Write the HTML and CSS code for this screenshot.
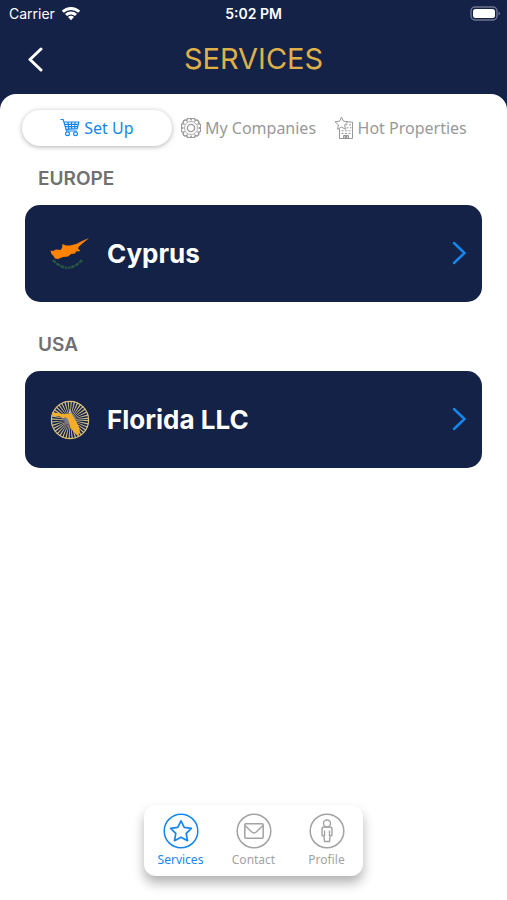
FILE: index.html
```html
<!DOCTYPE html>
<html lang="en">
<head>
  <meta charset="UTF-8">
  <meta name="viewport" content="width=device-width, initial-scale=1.0">
  <title>Services</title>
  <link rel="stylesheet" href="styles.css">
</head>
<body>
  <header class="header">
    <div class="status-bar">
      <div class="status-left">
        <span>Carrier</span>
        <svg width="20" height="15" viewBox="0 0 20 15" fill="none" stroke="#fff" stroke-width="3">
          <path d="M1.8 5.8a11.6 11.6 0 0 1 16.4 0M5 9a7.1 7.1 0 0 1 10 0"/>
          <path d="M10 14.2 7 11a4.2 4.2 0 0 1 6 0z" fill="#fff" stroke="none"/>
        </svg>
      </div>
      <span class="status-time">5:02 PM</span>
      <div class="status-right">
        <svg width="31" height="15" viewBox="0 0 31 15">
          <rect x="1" y="1" width="26" height="13" rx="4" fill="none" stroke="#6d7490" stroke-width="1.4"/>
          <rect x="3" y="3" width="22" height="9" rx="2.5" fill="#fff"/>
          <path d="M28.5 5.5c2 .8 2 3.2 0 4z" fill="#6d7490"/>
        </svg>
      </div>
    </div>
    <div class="title-bar">
      <button class="back" aria-label="Back">
        <svg width="16" height="26" viewBox="0 0 16 26" fill="none" stroke="#fff" stroke-width="3" stroke-linecap="round" stroke-linejoin="round">
          <path d="M14 3 3 13.500l11 10.500"/>
        </svg>
      </button>
      <h1>SERVICES</h1>
    </div>
  </header>

  <main class="content">
    <div class="tabs">
      <button class="tab active">
        <svg width="20" height="20" viewBox="0 0 20 20" fill="none" stroke="currentColor" stroke-width="1.2">
          <path d="M.5 1.5h2.7l3.3 11.5h10.7M3.8 4h15l-1.5 6.7-11.3.6M4.5 6.3h13.8M5.2 8.6h12.6M8 4l.8 7M11.5 4v7M15 4l-.4 7"/>
          <circle cx="7.5" cy="15.8" r="1.9"/>
          <circle cx="15.5" cy="15.8" r="1.9"/>
        </svg>
        Set Up
      </button>
      <button class="tab">
        <svg width="20" height="20" viewBox="0 0 20 20" fill="none" stroke="currentColor" stroke-width="1.4">
          <path d="M18.500 10A2.2 2.2 0 0 1 17.300 14.200A2.2 2.2 0 0 1 14.200 17.300A2.2 2.2 0 0 1 10 18.500A2.2 2.2 0 0 1 5.800 17.300A2.2 2.2 0 0 1 2.700 14.200A2.2 2.2 0 0 1 1.500 10A2.2 2.2 0 0 1 2.700 5.800A2.2 2.2 0 0 1 5.800 2.700A2.2 2.2 0 0 1 10 1.500A2.2 2.2 0 0 1 14.200 2.700A2.2 2.2 0 0 1 17.300 5.800A2.2 2.2 0 0 1 18.500 10z"/>
          <circle cx="10" cy="10" r="6.5" stroke-width=".8"/>
          <circle cx="10" cy="10" r="3.6"/>
        </svg>
        My Companies
      </button>
      <button class="tab">
        <svg width="20" height="24" viewBox="0 0 20 24" fill="none" stroke="currentColor" stroke-width="1">
          <path d="M7.5 1l1.9 4.2 4.5.5-3.3 3.1.9 4.5-4-2.3-4 2.3.9-4.5L1 5.7l4.6-.5z"/>
          <path d="M5.5 13v9.5h13V6h-5M9.5 22.5v-3h5v3"/>
          <path d="M11.5 8.8h6M12.5 11.8h5M7.5 14.8h10M7.5 17.5h10" stroke-dasharray="2 1.5"/>
          <path d="M11 20h2v2.5h-2z" fill="currentColor"/>
        </svg>
        Hot Properties
      </button>
    </div>

    <section class="region">
      <h2>EUROPE</h2>
      <a class="card" href="#cyprus">
        <svg class="card-icon" width="40" height="40" viewBox="0 0 40 40">
          <path d="M.5 16.5 3 17 6 15.500 10.500 16 12 14 12.500 10 16 11.500 20 11.500 26 10 33 6.500 39 4 33 9 29 12.500 28 14.500 30.500 17 26 17.500 25 19.500 21 20 18 22.500 13 23 8 25 5 24.500 3.500 22 1.500 20z" fill="#ff8200"/>
          <path d="M3 26c3 3.500 8 7 14 8M32 26c-3 3.500-8 7-14 8" fill="none" stroke="#265744" stroke-width="2.4" stroke-dasharray="4 .8"/>
        </svg>
        <span class="card-name">Cyprus</span>
        <svg class="chevron" width="16" height="24" viewBox="0 0 16 24" fill="none" stroke="#1487ee" stroke-width="2.5" stroke-linecap="round">
          <path d="M3 2l10.500 10L3 22"/>
        </svg>
      </a>
    </section>

    <section class="region">
      <h2>USA</h2>
      <a class="card" href="#florida">
        <svg class="card-icon" width="40" height="40" viewBox="0 0 40 40">
          <circle cx="20" cy="20" r="12" fill="none" stroke="#c9b88a" stroke-width="14" stroke-dasharray="0.9 1.194"/>
          <circle cx="20" cy="20" r="18.6" fill="none" stroke="#d9bf7c" stroke-width="1.2"/>
          <circle cx="20" cy="19" r="6" fill="#77798a"/>
          <path d="M18.500 13 20 8.500 21.500 13z" fill="#b9b4a4"/>
          <path d="M2 12.500 9 13 10 14 16 14 21.500 13 23 16 26 21 29 27 30 32 28.500 35.500 26 34.500 23 31 20.500 28 19.500 24 18 19.500 15.500 17 13 18.500 10 16.500 3 16z" fill="#f3ad2c"/>
        </svg>
        <span class="card-name">Florida LLC</span>
        <svg class="chevron" width="16" height="24" viewBox="0 0 16 24" fill="none" stroke="#1487ee" stroke-width="2.5" stroke-linecap="round">
          <path d="M3 2l10.500 10L3 22"/>
        </svg>
      </a>
    </section>
  </main>

  <nav class="bottom-nav">
    <a class="nav-item active" href="#services">
      <svg width="36" height="36" viewBox="0 0 36 36" fill="none" stroke="currentColor" stroke-width="1.5">
        <circle cx="18" cy="18" r="16.8"/>
        <path d="M18 7.8l3.2 6.6 7.2 1-5.2 5 1.3 7.3-6.5-3.5-6.5 3.5 1.3-7.3-5.2-5 7.2-1z" stroke-linejoin="round" stroke-width="1.7"/>
      </svg>
      Services
    </a>
    <a class="nav-item" href="#contact">
      <svg width="36" height="36" viewBox="0 0 36 36" fill="none" stroke="currentColor" stroke-width="1.5">
        <circle cx="18" cy="18" r="16.8"/>
        <rect x="8.8" y="10.8" width="18.4" height="14.4" rx="1"/>
        <path d="M9 12.5l6.8 6.5q2.2 1.8 4.4 0l6.8-6.5"/>
      </svg>
      Contact
    </a>
    <a class="nav-item" href="#profile">
      <svg width="36" height="36" viewBox="0 0 36 36" fill="none" stroke="currentColor" stroke-width="1.4">
        <circle cx="18" cy="18" r="16.8" stroke-width="1.5"/>
        <circle cx="18" cy="10.5" r="3.5"/>
        <path d="M15.5 14h5q2.5 0 2.5 2.5v5q0 1.5-2 1.5l-.5 5.5h-5L15 23q-2 0-2-1.5v-5q0-2.5 2.5-2.5zM15.5 17.5V23M20.5 17.5V23"/>
      </svg>
      Profile
    </a>
  </nav>
</body>
</html>
```
FILE: styles.css
```css
* {
  box-sizing: border-box;
}

body {
  margin: 0;
  min-height: 100vh;
  display: flex;
  flex-direction: column;
  background: #fff;
  font-family: Inter, "Liberation Sans", sans-serif;
}

h1, h2 {
  margin: 0;
}

button {
  border: none;
  background: none;
  padding: 0;
  cursor: pointer;
}

a {
  text-decoration: none;
}

/* Header */
.header {
  background: #152247;
  color: #fff;
  padding-bottom: 32px;
}

.status-bar {
  display: grid;
  grid-template-columns: 1fr auto 1fr;
  align-items: center;
  height: 26px;
  padding: 0 9px;
  font-size: 14px;
}

.status-left {
  display: flex;
  align-items: center;
  gap: 6px;
}

.status-time {
  font-weight: 600;
}

.status-right {
  display: flex;
  justify-content: flex-end;
  margin-right: -3px;
}

.title-bar {
  display: grid;
  grid-template-columns: 40px 1fr 40px;
  align-items: center;
  height: 66px;
  padding: 0 15px;
}

.back {
  display: flex;
  justify-content: center;
}

.title-bar h1 {
  color: #deb04a;
  font-size: 29px;
  font-weight: 400;
  line-height: 32px;
  text-align: center;
}

/* Content sheet overlaps the bottom of the header */
.content {
  flex: 1;
  margin-top: -30px;
  padding-top: 16px;
  background: #fff;
  border-radius: 16px 16px 0 0;
}

.tabs {
  display: flex;
  gap: 2px;
  padding: 0 32px 0 22px;
}

.tab {
  flex: 1 1 0;
  display: flex;
  align-items: center;
  justify-content: center;
  gap: 4px;
  height: 36px;
  border-radius: 18px;
  color: #999;
  font-family: "Noto Sans", sans-serif;
  font-size: 16px;
  white-space: nowrap;
}

.tab.active {
  color: #1487ee;
  box-shadow: 0 1px 5px rgba(0, 0, 0, 0.3);
}

.region {
  padding: 21px 25px 0;
}

.region + .region {
  padding-top: 31px;
}

.region h2 {
  padding-left: 13px;
  margin-bottom: 14px;
  color: #707070;
  font-size: 19px;
  font-weight: 600;
  line-height: 24px;
}

.card {
  display: flex;
  align-items: center;
  height: 97px;
  padding: 0 15px 0 25px;
  background: #152247;
  border-radius: 15px;
  color: #fff;
}

.card-name {
  flex: 1;
  padding-left: 17px;
  font-size: 26px;
  font-weight: 700;
}

.chevron {
  margin-bottom: 2px;
}

/* Bottom navigation */
.bottom-nav {
  align-self: center;
  display: flex;
  margin-bottom: 24px;
  padding: 8px 0 7px;
  background: #fff;
  border-radius: 12px;
  box-shadow: 0 7px 12px rgba(0, 0, 0, 0.3);
}

.nav-item {
  display: flex;
  flex-direction: column;
  align-items: center;
  width: 73px;
  gap: 2px;
  color: #a3a3a3;
  font-family: "Noto Sans", sans-serif;
  font-size: 12px;
  line-height: 18px;
}

.nav-item.active {
  color: #1487ee;
}
```
